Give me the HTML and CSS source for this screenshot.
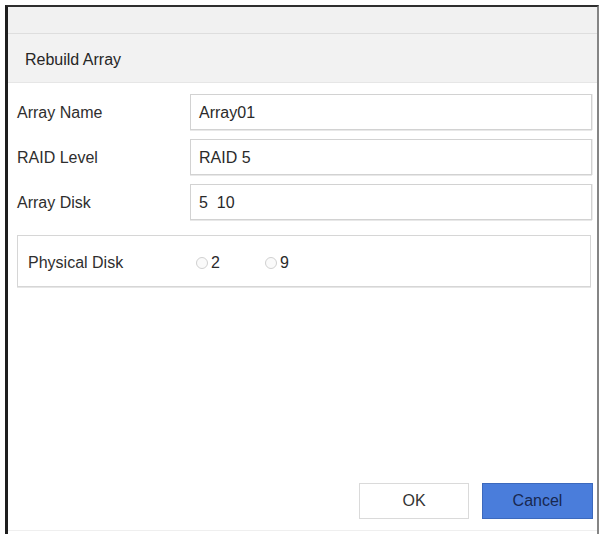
FILE: index.html
```html
<!DOCTYPE html>
<html>
<head>
<meta charset="utf-8">
<link rel="stylesheet" href="styles.css">
</head>
<body>
<div class="frame">
  <div class="topbar"></div>
  <div class="titlebar">Rebuild Array</div>
  <div class="form">
    <div class="row">
      <div class="label">Array Name</div>
      <div class="field">Array01</div>
    </div>
    <div class="row">
      <div class="label">RAID Level</div>
      <div class="field">RAID 5</div>
    </div>
    <div class="row">
      <div class="label">Array Disk</div>
      <div class="field">5&nbsp;&nbsp;10</div>
    </div>
    <div class="group">
      <div class="group-label">Physical Disk</div>
      <div class="radios">
        <span class="radio"><span class="circle"></span>2</span>
        <span class="radio"><span class="circle"></span>9</span>
      </div>
    </div>
  </div>
  <div class="spacer"></div>
  <div class="footer">
    <button class="btn btn-ok">OK</button>
    <button class="btn btn-cancel">Cancel</button>
  </div>
</div>
</body>
</html>
```

FILE: styles.css
```css
html, body {
  margin: 0;
  padding: 0;
  background: #ffffff;
}
body {
  font-family: "Liberation Sans", Arial, sans-serif;
  font-size: 16px;
  color: #2e2e2e;
}
.frame {
  box-sizing: border-box;
  margin: 5px 0 0 5px;
  width: 594px;
  height: 529px;
  border-left: 3px solid #1e1e1e;
  border-top: 2px solid #2e2e2e;
  border-right: 2px solid #858585;
  display: flex;
  flex-direction: column;
  background: #ffffff;
}
.topbar {
  height: 26px;
  background: #f1f1f1;
  border-bottom: 1px solid #dedede;
}
.titlebar {
  height: 49px;
  background: #f2f2f2;
  border-bottom: 1px solid #e6e6e6;
  display: flex;
  align-items: center;
  padding-left: 17px;
  padding-top: 4px;
  box-sizing: border-box;
  color: #262626;
}
.form {
  padding: 11px 5px 0 9px;
  display: flex;
  flex-direction: column;
  gap: 9px;
}
.row {
  display: grid;
  grid-template-columns: 173px 1fr;
  height: 36px;
  align-items: center;
}
.label {
  color: #2e2e2e;
  padding-top: 2px;
}
.field {
  box-sizing: border-box;
  height: 36px;
  border: 1px solid #d2d2d2;
  box-shadow: 0 1px 0 #e8e8e8, 1px 0 0 #ececec;
  display: flex;
  align-items: center;
  padding-left: 8px;
  padding-top: 1px;
  color: #2a2a2a;
}
.group {
  box-sizing: border-box;
  margin-top: 6px;
  margin-right: 1px;
  height: 52px;
  border: 1px solid #d6d6d6;
  box-shadow: 0 1px 0 #e6e6e6;
  display: flex;
  align-items: center;
  padding-left: 10px;
  padding-top: 3px;
}
.group-label {
  width: 168px;
  color: #2e2e2e;
}
.radios {
  display: flex;
  gap: 45px;
}
.radio {
  display: inline-flex;
  align-items: center;
  gap: 3px;
  color: #2a2a2a;
}
.circle {
  display: inline-block;
  box-sizing: border-box;
  width: 12px;
  height: 12px;
  border-radius: 50%;
  border: 1px solid #d0d0d0;
  background: #fafafa;
}
.spacer {
  flex: 1;
}
.footer {
  display: flex;
  justify-content: flex-end;
  gap: 13px;
  padding: 0 4px 11px 0;
  border-bottom: 1px solid #efefef;
  margin-bottom: 3px;
}
.btn {
  box-sizing: border-box;
  height: 36px;
  font-family: "Liberation Sans", Arial, sans-serif;
  font-size: 16px;
  cursor: pointer;
}
.btn-ok {
  width: 110px;
  background: #ffffff;
  border: 1px solid #dadada;
  color: #333333;
}
.btn-cancel {
  width: 111px;
  background: #4a7ddb;
  border: 1px solid #3c69bd;
  color: #182850;
}
```
